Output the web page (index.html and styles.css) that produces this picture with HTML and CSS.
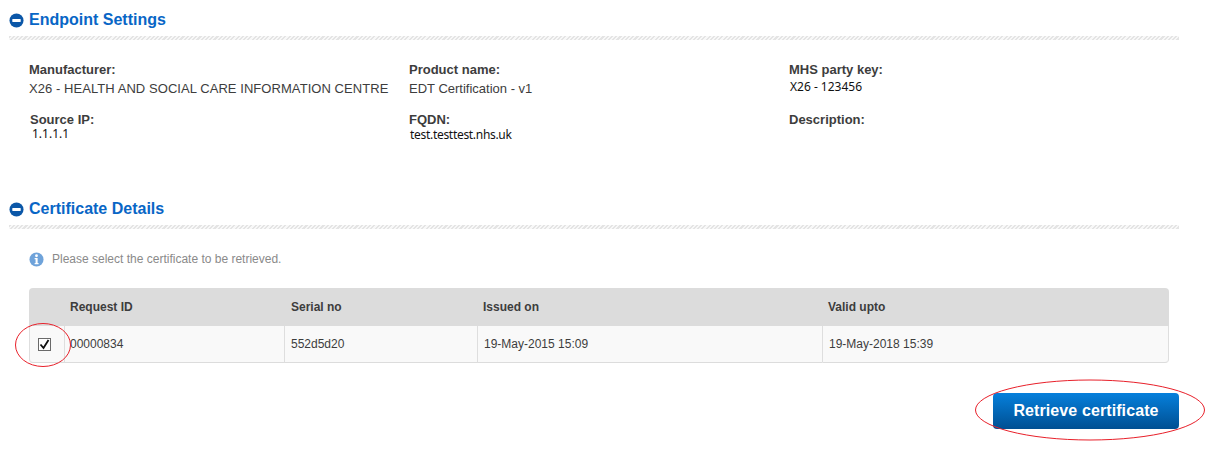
FILE: index.html
```html
<!DOCTYPE html>
<html lang="en">

<head>
  <meta charset="UTF-8">
  <meta name="viewport" content="width=device-width, initial-scale=1.0">
  <title>Endpoint Settings</title>
  <link rel="stylesheet" href="styles.css">
</head>

<body>
  <div class="page">
    <h2 class="section-title">
      <svg class="collapse-icon" viewBox="0 0 16 16" xmlns="http://www.w3.org/2000/svg">
        <circle cx="8" cy="8" r="7.5" fill="#0b57a8" />
        <rect x="3.5" y="6.5" width="9" height="3" rx="0.5" fill="#fff" />
      </svg>
      Endpoint Settings
    </h2>
    <div class="hatch"></div>

    <div class="fields">
      <div class="field">
        <div class="label">Manufacturer:</div>
        <div class="value value-long">X26 - HEALTH AND SOCIAL CARE INFORMATION CENTRE</div>
      </div>
      <div class="field">
        <div class="label">Product name:</div>
        <div class="value">EDT Certification - v1</div>
      </div>
      <div class="field">
        <div class="label">MHS party key:</div>
        <div class="pasted pasted-key">X26 - 123456</div>
      </div>
      <div class="field">
        <div class="label label-source">Source IP:</div>
        <div class="pasted pasted-ip">1.1.1.1</div>
      </div>
      <div class="field">
        <div class="label">FQDN:</div>
        <div class="pasted pasted-fqdn">test.testtest.nhs.uk</div>
      </div>
      <div class="field">
        <div class="label">Description:</div>
      </div>
    </div>

    <h2 class="section-title section-second">
      <svg class="collapse-icon" viewBox="0 0 16 16" xmlns="http://www.w3.org/2000/svg">
        <circle cx="8" cy="8" r="7.5" fill="#0b57a8" />
        <rect x="3.5" y="6.5" width="9" height="3" rx="0.5" fill="#fff" />
      </svg>
      Certificate Details
    </h2>
    <div class="hatch"></div>

    <div class="note">
      <svg class="info-icon" viewBox="0 0 16 16" xmlns="http://www.w3.org/2000/svg">
        <circle cx="8" cy="8" r="7.5" fill="#6fa3da" />
        <circle cx="8" cy="4" r="1.5" fill="#fff" />
        <path d="M6 6.5h3.2v5.2h1v1.3H6v-1.3h1V7.8H6z" fill="#fff" />
      </svg>
      Please select the certificate to be retrieved.
    </div>

    <table class="cert-table">
      <thead>
        <tr>
          <th class="col-check"></th>
          <th class="col-id">Request ID</th>
          <th class="col-serial">Serial no</th>
          <th class="col-issued">Issued on</th>
          <th>Valid upto</th>
        </tr>
      </thead>
      <tbody>
        <tr>
          <td class="cell-check">
            <span class="checkbox">
              <svg viewBox="0 0 11 11" xmlns="http://www.w3.org/2000/svg">
                <path d="M1.500 5.500l3 3.500 5-8" fill="none" stroke="#111" stroke-width="1.800" />
              </svg>
            </span>
          </td>
          <td class="cell-id">00000834</td>
          <td>552d5d20</td>
          <td>19-May-2015 15:09</td>
          <td>19-May-2018 15:39</td>
        </tr>
      </tbody>
    </table>

    <div class="actions">
      <button class="retrieve-button">Retrieve certificate</button>
    </div>

    <svg class="ring ring-check" viewBox="0 0 58 46" xmlns="http://www.w3.org/2000/svg">
      <ellipse cx="29" cy="23" rx="27.500" ry="21.500" fill="none" stroke="#e8202a" />
    </svg>
    <svg class="ring ring-button" viewBox="0 0 232 62" xmlns="http://www.w3.org/2000/svg">
      <ellipse cx="116" cy="31" rx="114.500" ry="30" fill="none" stroke="#e8202a" />
    </svg>
  </div>
</body>

</html>
```

FILE: styles.css
```css
body {
  margin: 0;
  background: #fff;
  font-family: "Liberation Sans", Arial, sans-serif;
  color: #3d3d3d;
}

.page {
  position: relative;
  width: 1226px;
  height: 456px;
  padding: 10px 47px 0 9px;
  box-sizing: border-box;
  overflow: hidden;
}

.section-title {
  display: flex;
  align-items: center;
  gap: 5px;
  height: 20px;
  margin: 0;
  font-size: 16px;
  font-weight: bold;
  color: #0866c6;
}

.section-second {
  margin-top: 38px;
}

.collapse-icon {
  width: 15px;
  height: 15px;
  flex-shrink: 0;
}

.hatch {
  height: 4px;
  margin-top: 6px;
  background: repeating-linear-gradient(135deg, #e4e4e4 0, #e4e4e4 1.500px, #f8f8f8 1.500px, #f8f8f8 3px);
}

.fields {
  display: grid;
  grid-template-columns: 380px 380px 1fr;
  grid-auto-rows: 50px;
  margin-top: 21px;
  padding-left: 20px;
}

.label {
  height: 18px;
  font-size: 13px;
  line-height: 18px;
  font-weight: bold;
}

.label-source {
  padding-left: 1px;
}

.value {
  margin-top: 1px;
  font-size: 13px;
  line-height: 18px;
  white-space: nowrap;
}

.value-long {
  letter-spacing: 0.06px;
}

.pasted {
  font-family: "Noto Sans", sans-serif;
  font-size: 12px;
  line-height: 14px;
  color: #111;
}

.pasted-key {
  padding-left: 1px;
  margin-top: 1px;
}

.pasted-ip {
  padding-left: 3px;
  margin-top: -2px;
}

.pasted-fqdn {
  padding-left: 1px;
  margin-top: -1px;
  letter-spacing: -0.3px;
}

.note {
  display: flex;
  align-items: center;
  gap: 8px;
  height: 16px;
  margin-top: 22px;
  padding-left: 20px;
  font-size: 12px;
  color: #8a8a8a;
}

.info-icon {
  width: 15px;
  height: 15px;
  flex-shrink: 0;
}

.cert-table {
  width: 1140px;
  margin: 21px 0 0 20px;
  border-collapse: separate;
  border-spacing: 0;
  table-layout: fixed;
  font-size: 12px;
}

.cert-table th {
  height: 38px;
  padding: 0 0 0 6px;
  background: #dcdcdc;
  text-align: left;
  font-weight: bold;
}

.cert-table th:first-child {
  border-top-left-radius: 4px;
}

.cert-table th:last-child {
  border-top-right-radius: 4px;
}

.cert-table td {
  height: 36px;
  padding: 0 0 0 6px;
  background: #f9f9f9;
  border-left: 1px solid #dedede;
  border-bottom: 1px solid #dcdcdc;
}

.cert-table td:last-child {
  border-right: 1px solid #dedede;
  border-bottom-right-radius: 4px;
}

.cert-table td:first-child {
  border-bottom-left-radius: 4px;
}

.col-check {
  width: 29px;
}

.col-id {
  width: 214px;
}

.col-serial {
  width: 186px;
}

.col-issued {
  width: 339px;
}

.cert-table th.col-serial {
  padding-left: 7px;
}

.cert-table td.cell-check {
  padding-left: 8px;
}

.cert-table td.cell-id {
  padding-left: 5px;
}

.checkbox {
  display: block;
  width: 11px;
  height: 11px;
  border: 1px solid #6a6a6a;
  background: #fff;
}

.checkbox svg {
  display: block;
  width: 11px;
  height: 11px;
}

.actions {
  display: flex;
  justify-content: flex-end;
  margin-top: 30px;
}

.retrieve-button {
  width: 186px;
  height: 36px;
  border: 0;
  border-radius: 4px;
  background: linear-gradient(#0680dc, #004f92);
  color: #fff;
  font-family: "Liberation Sans", Arial, sans-serif;
  font-size: 16px;
  font-weight: bold;
  letter-spacing: 0.1px;
}

.ring {
  position: absolute;
}

.ring-check {
  left: 14px;
  top: 322px;
  width: 58px;
  height: 46px;
}

.ring-button {
  left: 974px;
  top: 379px;
  width: 232px;
  height: 62px;
}
```
